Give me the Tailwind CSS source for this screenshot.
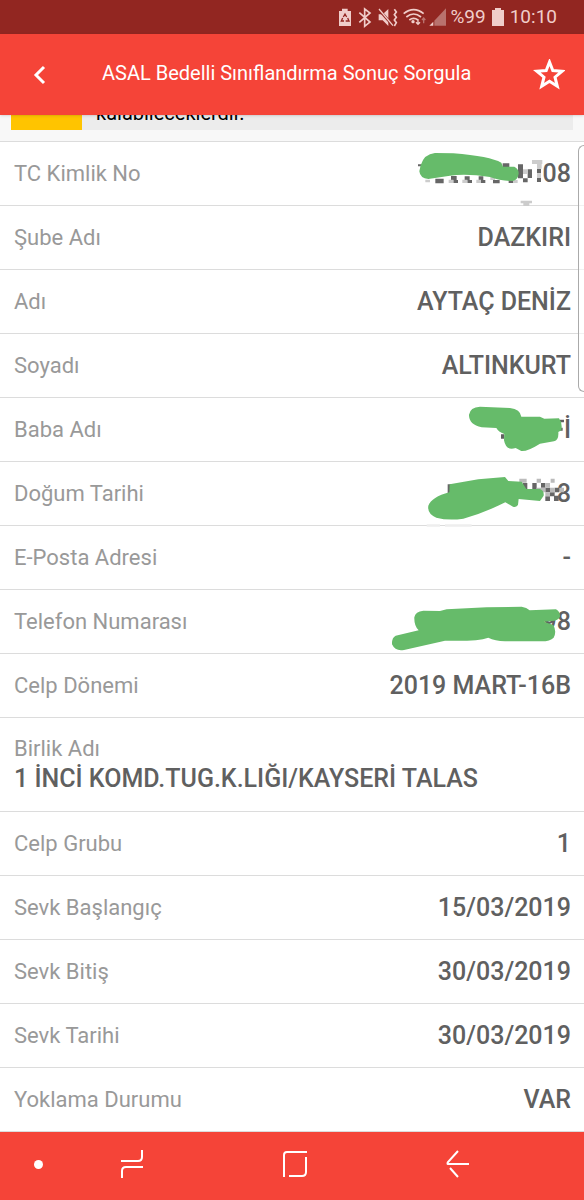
<!DOCTYPE html>
<html lang="tr">
<head>
<meta charset="utf-8">
<meta name="viewport" content="width=device-width, initial-scale=1">
<title>ASAL Bedelli Sınıflandırma Sonuç Sorgula</title>
<script src="https://cdn.jsdelivr.net/npm/@tailwindcss/browser@4"></script>
</head>
<body class="relative flex min-h-screen flex-col bg-white font-['Roboto',sans-serif]">

<!-- Status bar -->
<div class="flex h-[34px] shrink-0 items-center justify-end bg-[#922621] pr-[27px] text-[19px] text-[#f0cdca]">
  <svg class="h-[34px] w-[117px]" viewBox="0 0 351 102" fill="none" stroke="#f0cdca">
    <path d="M30 78V33h9v-7h17v7h10v45z" fill="#f0cdca" stroke="none"/>
    <path d="M43 51l5-9 5 9M56 54l4 9H50M45 63h-8l4-9" stroke="#922621" stroke-width="4"/>
    <path d="M91 38l32 28-16 13V27l16 12-32 28" stroke-width="5"/>
    <path d="M149 43h12l17-16v51l-17-17h-12z" fill="#f0cdca" stroke="none"/>
    <path d="M148 27l44 50" stroke="#922621" stroke-width="8"/>
    <path d="M150 27l42 50" stroke-width="4"/>
    <path d="M196 28l6 8-6 8 6 8-6 8 6 8-6 10" stroke-width="5"/>
    <path d="M224 41q30-24 60 0M232 51q22-18 44 0M241 60q13-10 26 0" stroke-width="5"/>
    <circle cx="252" cy="65" r="5" fill="#f0cdca" stroke="none"/>
    <path d="M267 58v15m-6-6l6 6 6-6" stroke-width="4"/>
    <path d="M284 70V54m-5 6l5-6 5 6" stroke="#b9726e" stroke-width="4"/>
    <path d="M301 77l12-12v12z" fill="#f0cdca" stroke="none"/>
    <path d="M316 77V62l35-37v52z" fill="#b9726e" stroke="none"/>
  </svg>
  <span class="ml-1">%99</span>
  <svg class="mx-[6px] h-[18px] w-[12px]" viewBox="0 0 12 18" fill="#f0cdca"><path d="M0 2h3V0h6v2h3v16H0z"/></svg>
  <span>10:10</span>
</div>

<!-- App bar -->
<header class="z-10 flex h-[81px] shrink-0 items-center bg-[#f54438] shadow-sm">
  <button type="button" aria-label="Geri" class="flex h-full w-20 items-center justify-center">
    <svg class="h-5 w-4" viewBox="0 0 16 20" fill="none" stroke="#fff" stroke-width="3"><path d="M12 2L4 10l8 8"/></svg>
  </button>
  <h1 class="flex-1 pb-1 pl-[22px] text-[20px] text-white">ASAL Bedelli Sınıflandırma Sonuç Sorgula</h1>
  <button type="button" aria-label="Favorilere ekle" class="flex h-full w-[70px] items-center justify-center">
    <svg class="h-8 w-8" viewBox="0 0 32 32" fill="none" stroke="#fff" stroke-width="3"><path d="M16.500 3l3.300 8.600 9.400.6-7.200 6 2.300 9.100-7.800-5-7.800 5 2.300-9.100-7.200-6 9.400-.6z"/></svg>
  </button>
</header>

<main class="flex-1">
  <!-- Notice scrolled under the app bar -->
  <div class="h-[27px] overflow-hidden border-b border-[#dcdcdc] bg-[#f8f8f8] px-[11px]">
    <div class="flex h-[15px] items-end bg-[#ececec]">
      <div class="h-full w-[71px] bg-[#ffc400]"></div>
      <p class="pb-[5px] pl-[14px] text-[20px] leading-6 text-black">kalabileceklerdir.</p>
    </div>
  </div>

  <dl class="text-[22px] text-[#999] [&_dd]:text-[25px] [&_dd]:font-medium [&_dd]:text-[#606060]">
    <div class="relative flex h-16 items-center justify-between border-b border-[#dcdcdc] pr-[13px] pl-[14px]">
      <dt>TC Kimlik No</dt><dd>08</dd>
      <svg class="absolute top-0 right-0 h-16 w-[204px] overflow-visible" viewBox="0 0 204 64" aria-hidden="true">
        <g transform="translate(20 -2) scale(.3333)">
          <path d="M54 73h12v6H54zM308 70h20v12h-20zM106 116h25v14h-25zM153 108h17v12h-17zM160 120h14v9h-14zM194 109h15v12h-15zM202 120h14v9h-14zM236 109h14v12h-14zM243 120h13v9h-13zM279 120h20v10h-20zM326 120h13v9h-13zM354 73h15v42h-15zM369 115h14v12h-14zM383 88h13v26h-13zM411 86h12v14h-12zM411 114h12v12h-12z" fill="#666"/>
          <path d="M76 119h14v8H76zM146 119h14v10h-14zM187 119h15v10h-15zM229 119h14v10h-14zM271 110h14v10h-14zM369 88h14v14h-14zM396 60h31v12h-31zM411 72h14v14h-14zM411 100h12v14h-12zM362 182h34v8h-34zM370 190h18v8h-18zM339 120h14v9h-14z" fill="#ccc"/>
          <path d="M62 76Q72 42 105 39L160 40Q270 49 304 68L309 80H343Q357 87 356 101Q353 120 338 123Q300 123 270 111Q200 100 150 107L85 117Q60 115 58 94Z" fill="#66bb6a"/>
        </g>
      </svg>
    </div>
    <div class="flex h-16 items-center justify-between border-b border-[#dcdcdc] pr-[13px] pl-[14px]"><dt>Şube Adı</dt><dd>DAZKIRI</dd></div>
    <div class="flex h-16 items-center justify-between border-b border-[#dcdcdc] pr-[13px] pl-[14px]"><dt>Adı</dt><dd>AYTAÇ DENİZ</dd></div>
    <div class="flex h-16 items-center justify-between border-b border-[#dcdcdc] pr-[13px] pl-[14px]"><dt>Soyadı</dt><dd>ALTINKURT</dd></div>
    <div class="relative flex h-16 items-center justify-between border-b border-[#dcdcdc] pr-[13px] pl-[14px]">
      <dt>Baba Adı</dt><dd>İ</dd>
      <svg class="absolute top-0 right-0 h-16 w-[204px] overflow-visible" viewBox="0 0 204 64" aria-hidden="true">
        <g transform="translate(70 -8) scale(.3333)">
          <path d="M153 133h10v13h-10zM330 89h12v8h-12zM330 113h8v9h-8z" fill="#606060"/>
          <path d="M57 74Q60 52 90 50L180 54Q211 58 214 80L270 80L283 86L327 85Q338 98 334 121L325 126Q327 150 312 154L270 161Q232 185 214 183L197 174Q168 184 162 151L163 132Q145 126 139 114L95 112Q56 103 57 74Z" fill="#66bb6a"/>
        </g>
      </svg>
    </div>
    <div class="relative flex h-16 items-center justify-between border-b border-[#dcdcdc] pr-[13px] pl-[14px]">
      <dt>Doğum Tarihi</dt><dd>8</dd>
      <svg class="absolute top-0 right-0 h-16 w-[204px] overflow-visible" viewBox="0 0 204 64" aria-hidden="true">
        <g transform="translate(30 3) scale(.3333)">
          <path d="M113 58h10v26h-10zM339 54h13v24h-13zM367 54h13v26h-13zM393 54h13v14h-13zM406 68h14v14h-14zM420 82h14v12h-14zM434 68h14v14h-14zM406 94h14v14h-14zM432 92h14v16h-14z" fill="#666"/>
          <path d="M328 41h22v12h-22zM380 41h13v12h-13zM422 41h12v12h-12zM380 68h13v12h-13zM406 54h14v14h-14zM393 68h13v14h-13zM420 68h14v14h-14zM448 68h14v14h-14zM406 82h14v12h-14z" fill="#bbb"/>
          <path d="M50 178h40v7H50zM105 178h80v7h-80z" fill="#eee"/>
          <path d="M119 58L205 43L285 36L295 48L335 50L349 72H390Q403 77 401 92L390 108L326 102L324 120Q317 129 309 125L286 112Q220 145 160 161Q115 168 79 158Q51 146 55 122Q65 96 118 82Z" fill="#66bb6a"/>
        </g>
      </svg>
    </div>
    <div class="flex h-16 items-center justify-between border-b border-[#dcdcdc] pr-[13px] pl-[14px]"><dt>E-Posta Adresi</dt><dd>-</dd></div>
    <div class="relative flex h-16 items-center justify-between border-b border-[#dcdcdc] pr-[13px] pl-[14px]">
      <dt>Telefon Numarası</dt><dd>98</dd>
      <svg class="absolute top-0 right-0 h-16 w-[204px] overflow-visible" viewBox="0 0 204 64" aria-hidden="true">
        <path transform="translate(0 5) scale(.3333)" d="M103 67Q106 49 130 47L180 48L200 43L320 37L425 35Q440 37 449 46L528 43Q541 50 540 65Q535 77 515 78L492 80L520 90Q531 110 521 128Q510 140 480 139H375Q345 138 325 128Q290 140 195 137L72 165Q46 170 36 148Q35 128 47 122L116 106Q102 92 103 67Z" fill="#66bb6a"/>
      </svg>
    </div>
    <div class="flex h-16 items-center justify-between border-b border-[#dcdcdc] pr-[13px] pl-[14px]"><dt>Celp Dönemi</dt><dd>2019 MART-16B</dd></div>
    <div class="flex h-[94px] flex-col justify-center border-b border-[#dcdcdc] pr-[13px] pl-[14px] leading-8"><dt class="leading-7">Birlik Adı</dt><dd>1 İNCİ KOMD.TUG.K.LIĞI/KAYSERİ TALAS</dd></div>
    <div class="flex h-16 items-center justify-between border-b border-[#dcdcdc] pr-[13px] pl-[14px]"><dt>Celp Grubu</dt><dd>1</dd></div>
    <div class="flex h-16 items-center justify-between border-b border-[#dcdcdc] pr-[13px] pl-[14px]"><dt>Sevk Başlangıç</dt><dd>15/03/2019</dd></div>
    <div class="flex h-16 items-center justify-between border-b border-[#dcdcdc] pr-[13px] pl-[14px]"><dt>Sevk Bitiş</dt><dd>30/03/2019</dd></div>
    <div class="flex h-16 items-center justify-between border-b border-[#dcdcdc] pr-[13px] pl-[14px]"><dt>Sevk Tarihi</dt><dd>30/03/2019</dd></div>
    <div class="flex h-16 items-center justify-between border-b border-[#dcdcdc] pr-[13px] pl-[14px]"><dt>Yoklama Durumu</dt><dd>VAR</dd></div>
  </dl>
</main>

<!-- Edge panel handle -->
<div class="absolute top-[145px] right-0 h-[247px] w-[6px] rounded-l-md border border-r-0 border-[#aaa] bg-white/60"></div>

<!-- Navigation bar -->
<nav class="flex h-[68px] shrink-0 items-center bg-[#f54438]">
  <button type="button" aria-label="Gezinme çubuğunu gizle" class="flex h-full w-[50px] items-center justify-end pr-[7px]"><span class="mb-1 size-[9px] rounded-full bg-white"></span></button>
  <div class="grid h-full flex-1 grid-cols-3 pr-[45px]">
    <button type="button" aria-label="Son uygulamalar" class="flex items-center justify-center">
      <svg class="mb-1 h-7 w-6" viewBox="0 0 24 28" fill="none" stroke="#fff" stroke-width="2"><path d="M1 11h17q4 0 4-4V0M23 17H6q-4 0-4 4v7"/></svg>
    </button>
    <button type="button" aria-label="Ana ekran" class="flex items-center justify-center">
      <svg class="mb-1 h-7 w-6" viewBox="0 0 24 28" fill="none" stroke="#fff" stroke-width="2"><path d="M1 27V5q0-3 3-3h20M6 26h13q4 0 4-4V7"/></svg>
    </button>
    <button type="button" aria-label="Geri dön" class="flex items-center justify-center">
      <svg class="mb-1 h-7 w-6" viewBox="0 0 24 28" fill="none" stroke="#fff" stroke-width="2"><path d="M12 1L2 12q-1 2 0 2h21M4 18l8 9"/></svg>
    </button>
  </div>
</nav>
</body>
</html>
